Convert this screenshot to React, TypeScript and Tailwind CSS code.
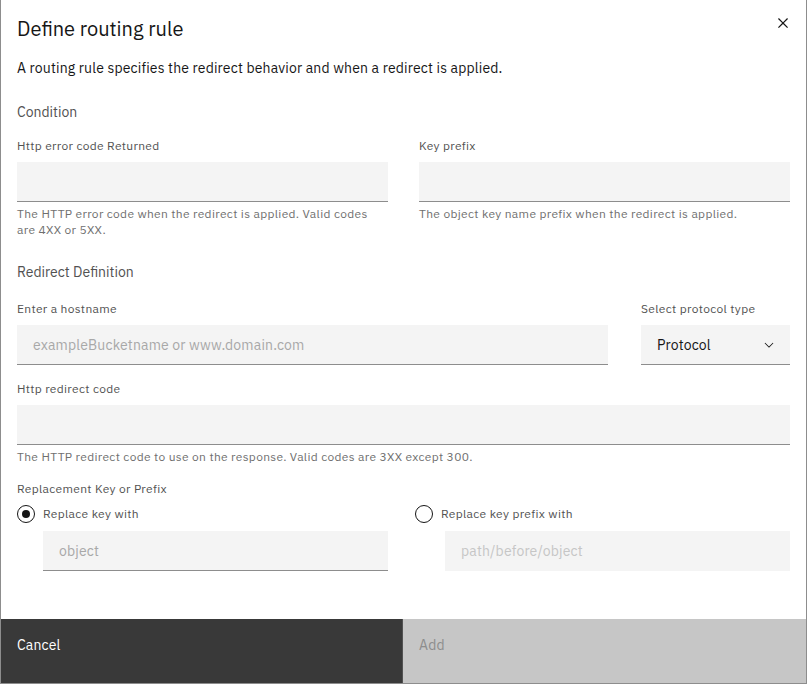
import React from "react";

const font = { fontFamily: "'IBM Plex Sans', Roboto, 'Liberation Sans', sans-serif" };

function CloseIcon() {
  return (
    <svg width="20" height="20" viewBox="0 0 32 32" fill="#161616">
      <path d="M24 9.4L22.6 8 16 14.6 9.4 8 8 9.4 14.6 16 8 22.6 9.4 24 16 17.4 22.6 24 24 22.6 17.4 16 24 9.4z" />
    </svg>
  );
}

function ChevronDown() {
  return (
    <svg width="14" height="14" viewBox="0 0 16 16" fill="#161616">
      <path d="M8 11L3 6 3.7 5.3 8 9.6 12.3 5.3 13 6z" />
    </svg>
  );
}

function Label({ children }: { children: React.ReactNode }) {
  return (
    <div className="text-[12px] leading-4 tracking-[0.32px] text-[#525252]">
      {children}
    </div>
  );
}

function Helper({ children }: { children: React.ReactNode }) {
  return (
    <div className="mt-1 text-[12px] leading-4 tracking-[0.32px] text-[#6f6f6f]">
      {children}
    </div>
  );
}

function TextInput({
  placeholder,
  disabled,
}: {
  placeholder?: string;
  disabled?: boolean;
}) {
  return (
    <div
      className={
        "h-10 bg-[#f4f4f4] border-b flex items-center px-4 pt-[1px] text-[14px] tracking-[0.16px] " +
        (disabled
          ? "border-transparent text-[#c6c6c6]"
          : "border-[#8d8d8d] text-[#a8a8a8]")
      }
    >
      {placeholder}
    </div>
  );
}

function Radio({ checked, label }: { checked?: boolean; label: string }) {
  return (
    <div className="flex items-center gap-2 h-[18px]">
      <div className="w-[18px] h-[18px] rounded-full border border-[#161616] flex items-center justify-center">
        {checked && <div className="w-2 h-2 rounded-full bg-[#161616]" />}
      </div>
      <span className="text-[12px] leading-4 tracking-[0.32px] text-[#525252]">
        {label}
      </span>
    </div>
  );
}

export default function App() {
  return (
    <div style={font} className="w-[808px] h-[684px] bg-white">
      <div className="w-[807px] h-[684px] bg-white border-x border-b border-[#8d8d8d] flex flex-col">
        <header className="relative pt-[15px] px-4">
          <h3 className="text-[20px] leading-7 text-[#161616]">Define routing rule</h3>
          <button className="absolute top-[13px] right-[13px]">
            <CloseIcon />
          </button>
        </header>

        <main className="flex-1 px-4">
          <p className="mt-[15px] text-[14px] leading-5 tracking-[0.16px] text-[#161616]">
            A routing rule specifies the redirect behavior and when a redirect is applied.
          </p>

          <h4 className="mt-6 text-[14px] leading-5 text-[#525252]">Condition</h4>

          <div className="mt-4 grid grid-cols-2 gap-x-[31px]">
            <div>
              <Label>Http error code Returned</Label>
              <div className="mt-2">
                <TextInput />
              </div>
              <Helper>
                The HTTP error code when the redirect is applied. Valid codes are 4XX or 5XX.
              </Helper>
            </div>
            <div>
              <Label>Key prefix</Label>
              <div className="mt-2">
                <TextInput />
              </div>
              <Helper>The object key name prefix when the redirect is applied.</Helper>
            </div>
          </div>

          <h4 className="mt-6 text-[14px] leading-5 text-[#525252]">Redirect Definition</h4>

          <div className="mt-[19px] flex gap-[33px]">
            <div className="flex-1">
              <Label>Enter a hostname</Label>
              <div className="mt-2">
                <TextInput placeholder="exampleBucketname or www.domain.com" />
              </div>
            </div>
            <div className="w-[149px]">
              <Label>Select protocol type</Label>
              <div className="mt-2 h-10 bg-[#f4f4f4] border-b border-[#8d8d8d] flex items-center justify-between pl-4 pr-[14px] pt-[1px] text-[14px] tracking-[0.16px] text-[#161616]">
                <span>Protocol</span>
                <ChevronDown />
              </div>
            </div>
          </div>

          <div className="mt-4">
            <Label>Http redirect code</Label>
            <div className="mt-2">
              <TextInput />
            </div>
            <Helper>
              The HTTP redirect code to use on the response. Valid codes are 3XX except 300.
            </Helper>
          </div>

          <div className="mt-4">
            <Label>Replacement Key or Prefix</Label>
          </div>
          <div className="mt-2 grid grid-cols-2 gap-x-[31px]">
            <div>
              <Radio checked label="Replace key with" />
              <div className="mt-2 ml-[26px]">
                <TextInput placeholder="object" />
              </div>
            </div>
            <div>
              <div className="-ml-1">
                <Radio label="Replace key prefix with" />
              </div>
              <div className="mt-2 ml-[26px]">
                <TextInput placeholder="path/before/object" disabled />
              </div>
            </div>
          </div>
        </main>

        <footer className="flex h-16">
          <button className="w-[402px] bg-[#393939] text-white text-left text-[14px] leading-5 tracking-[0.16px] pl-4 pt-4 flex items-start border-r border-[#525252]">
            Cancel
          </button>
          <button className="flex-1 bg-[#c6c6c6] text-[#8d8d8d] text-left text-[14px] leading-5 tracking-[0.16px] pl-4 pt-4 flex items-start">
            Add
          </button>
        </footer>
      </div>
    </div>
  );
}
